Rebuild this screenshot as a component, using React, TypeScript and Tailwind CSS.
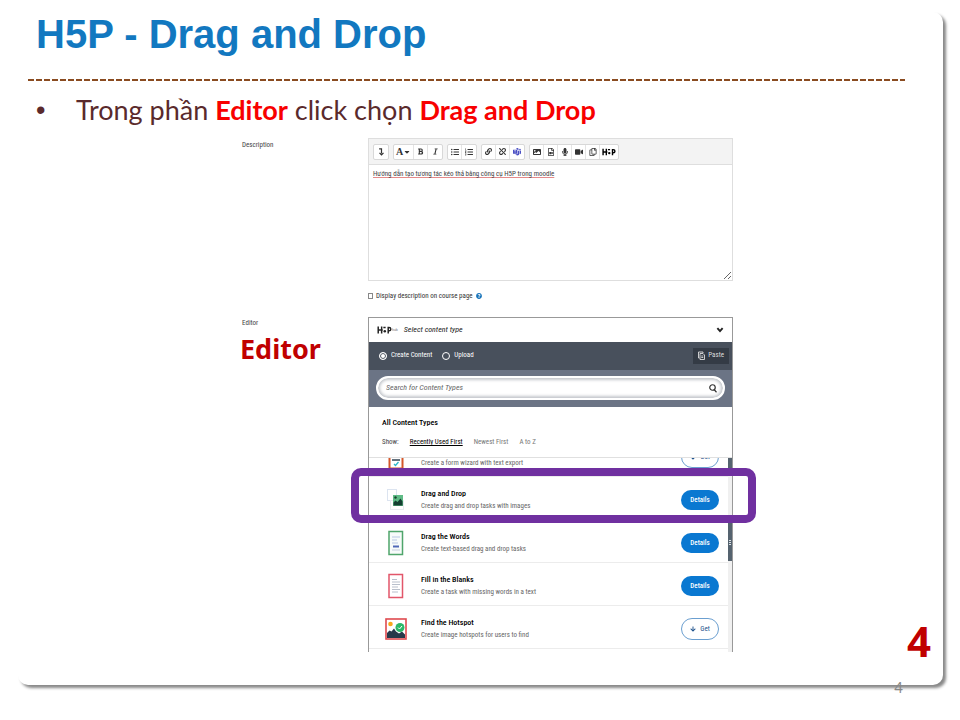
import { useState } from "react";
import type { ReactNode } from "react";
import {
    FaBold,
    FaItalic,
    FaListUl,
    FaListOl,
    FaLink,
    FaImage,
    FaRegFileVideo,
    FaMicrophone,
    FaVideo,
    FaRegCopy,
    FaQuestionCircle,
    FaArrowDown,
    FaCaretDown,
    FaUnlink,
} from "react-icons/fa";
import { BsMicrosoftTeams } from "react-icons/bs";

const H5PMark = ({ className }: { className: string }) => (
    <svg viewBox="0 0 26 14" className={className} fill="none" stroke="currentColor" strokeWidth="2.6">
        <path d="M2 1v12M8 1v12M2 7h8M11 2.500h4M19.500 13V2.500H21a3 3 0 0 1 0 6h-2" />
        <circle cx="13.500" cy="9" r="2.200" fill="currentColor" stroke="none" />
    </svg>
);

const PasteIcon = () => (
    <svg viewBox="0 0 14 18" className="h-[9px] w-[7px]" fill="none" stroke="currentColor" strokeWidth="1.800">
        <path d="M3 14H1V2h9v2" />
        <path d="M4 5h6l3 3v9H4z" />
        <path d="M6.500 10h4M6.500 13h4" />
    </svg>
);

const FormIcon = () => (
    <svg viewBox="0 0 20 26" className="h-[26px] w-5">
        <rect x="3.500" y="1" width="13" height="23.500" fill="#fff" stroke="#d4572a" strokeWidth="2" />
        <path d="M6 16h8" stroke="#345" strokeWidth="1.500" />
        <path d="m8 20 1.500 1.500L12.500 18" fill="none" stroke="#2bb5c9" strokeWidth="1.300" />
    </svg>
);

const DragDropIcon = () => (
    <svg viewBox="0 0 20 26" className="h-[26px] w-5">
        <rect x="1.500" y="2.500" width="9" height="11" fill="#fff" stroke="#dce4f0" />
        <rect x="4.500" y="13.500" width="13" height="9" fill="#fff" stroke="#e8ecf0" />
        <rect x="7" y="8" width="10" height="11" fill="#5fbb86" />
        <circle cx="9.500" cy="10.500" r="1.200" fill="#17442f" />
        <path d="M7.500 18.500v-3l2-2 2 1.500 3-3.500 2 3v4z" fill="#143f31" />
    </svg>
);

const WordsIcon = () => (
    <svg viewBox="0 0 20 26" className="h-[26px] w-5">
        <rect x="3" y="1.500" width="13.500" height="23" fill="#f7fbfa" stroke="#4fa56b" strokeWidth="1.500" />
        <path d="M6 7h8M6 10h5M6 13h6" stroke="#b9c7e4" />
        <path d="M7 16.500h6" stroke="#5068b8" strokeWidth="2" />
        <path d="M6 20h8" stroke="#c5cddd" />
    </svg>
);

const BlanksIcon = () => (
    <svg viewBox="0 0 20 26" className="h-[26px] w-5">
        <rect x="3" y="1.500" width="13.500" height="23" fill="#fff" stroke="#e2566a" strokeWidth="1.500" />
        <path d="M6 6.500h5M6 9h8M6 11.500h8M6 14h6M6 16.500h8M6 19h6" stroke="#b9c0cc" />
    </svg>
);

const HotspotIcon = () => (
    <svg viewBox="0 0 22 22" className="h-[22px] w-[22px] shrink-0">
        <rect x="1" y="1" width="20" height="20" fill="#fff" stroke="#df4a4f" strokeWidth="1.600" />
        <circle cx="5.500" cy="6" r="2.300" fill="#f7a81c" />
        <path d="M2 20v-5l2.500-2.500 2 1 2.500-3 2 3 3 2 3-2 3 3V20z" fill="#26394a" />
        <circle cx="15" cy="9.500" r="4.500" fill="#2bb868" />
        <path d="m13 9.500 1.500 1.500 2.500-3" fill="none" stroke="#fff" />
    </svg>
);

const toolGroups: { label: string; icon: ReactNode }[][] = [
    [{ label: "Show more buttons", icon: <svg viewBox="0 0 8 10" className="h-2 w-[7px]" fill="none" stroke="currentColor" strokeWidth="1.500"><path d="M1 1h3v6M1.500 6 4 8.500 6.500 6" /></svg> }],
    [
        { label: "Paragraph styles", icon: <><b className="font-['Liberation_Serif',serif] text-[10px]">A</b><FaCaretDown size={8} /></> },
        { label: "Bold", icon: <FaBold size={7} /> },
        { label: "Italic", icon: <FaItalic size={7} /> },
    ],
    [
        { label: "Unordered list", icon: <FaListUl size={8} /> },
        { label: "Ordered list", icon: <FaListOl size={8} /> },
    ],
    [
        { label: "Link", icon: <FaLink size={7} /> },
        { label: "Unlink", icon: <FaUnlink size={7} /> },
        { label: "Teams", icon: <BsMicrosoftTeams size={8} color="#4b50c4" /> },
    ],
    [
        { label: "Image", icon: <FaImage size={8} /> },
        { label: "Media", icon: <FaRegFileVideo size={8} /> },
        { label: "Record audio", icon: <FaMicrophone size={8} /> },
        { label: "Record video", icon: <FaVideo size={8} /> },
        { label: "Manage files", icon: <FaRegCopy size={8} /> },
        { label: "H5P", icon: <H5PMark className="h-2 w-[14px] text-black" /> },
    ],
];

// the first row is scrolled halfway out of the list, only its description is in view
const contentTypes = [
    { title: "", text: "Create a form wizard with text export", icon: <FormIcon />, installed: false },
    { title: "Drag and Drop", text: "Create drag and drop tasks with images", icon: <DragDropIcon />, installed: true },
    { title: "Drag the Words", text: "Create text-based drag and drop tasks", icon: <WordsIcon />, installed: true },
    { title: "Fill in the Blanks", text: "Create a task with missing words in a text", icon: <BlanksIcon />, installed: true },
    { title: "Find the Hotspot", text: "Create image hotspots for users to find", icon: <HotspotIcon />, installed: false },
];

const DescriptionEditor = () => {
    const [value, setValue] = useState("Hướng dẫn tạo tương tác kéo thả bằng công cụ H5P trong moodle");

    return (
        <div className="border border-[#dedede]">
            <div className="flex h-[26px] items-center gap-1 border-b border-[#dedede] bg-[#f3f3f3] px-1">
                {toolGroups.map((group, i) => (
                    <div key={i} className="flex rounded-xs border border-[#d8d8d8] bg-white">
                        {group.map((tool) => (
                            <button
                                key={tool.label}
                                aria-label={tool.label}
                                className="flex h-[14px] min-w-[14px] items-center justify-center border-r border-[#e4e4e4] px-[2px] text-[#333] last:border-r-0"
                            >
                                {tool.icon}
                            </button>
                        ))}
                    </div>
                ))}
            </div>
            <textarea
                id="description"
                value={value}
                onChange={(e) => setValue(e.target.value)}
                spellCheck={false}
                className="block h-[115px] w-full resize-y px-1 py-1 text-[7px] leading-[10px] text-[#444] underline decoration-[#e58a8a] outline-none"
            />
        </div>
    );
};

const ContentHub = () => {
    const [mode, setMode] = useState("create");
    const [search, setSearch] = useState("");

    return (
        <div className="border-x border-t border-[#999]">
            <button className="flex h-6 w-full items-center bg-white px-2 text-[#222]">
                <H5PMark className="h-2 w-[15px]" />
                <span className="text-[4px] text-[#777]">hub</span>
                <span className="ml-[6px] text-[8px] italic">Select content type</span>
                <svg viewBox="0 0 10 8" className="ml-auto h-[6px] w-2" fill="none" stroke="currentColor" strokeWidth="2.500">
                    <path d="m1.500 1.500 3.500 4 3.500-4" />
                </svg>
            </button>

            <div className="flex h-7 items-center gap-[10px] bg-[#48505c] pb-px pl-[10px] text-[7px] text-white">
                <label className="flex items-center gap-1">
                    <input
                        type="radio"
                        name="mode"
                        checked={mode === "create"}
                        onChange={() => setMode("create")}
                        className="h-2 w-2 appearance-none rounded-full border border-white checked:bg-white checked:shadow-[inset_0_0_0_1px_#48505c]"
                    />
                    Create Content
                </label>
                <label className="flex items-center gap-1">
                    <input
                        type="radio"
                        name="mode"
                        checked={mode === "upload"}
                        onChange={() => setMode("upload")}
                        className="h-2 w-2 appearance-none rounded-full border border-white checked:bg-white checked:shadow-[inset_0_0_0_1px_#48505c]"
                    />
                    Upload
                </label>
                <button className="mr-[3px] ml-auto flex h-4 items-center gap-[3px] bg-[#343b45] px-[5px] text-[#ddd]">
                    <PasteIcon />
                    Paste
                </button>
            </div>

            <div className="h-[37px] bg-[#6b7485] px-[7px] py-[6px]">
                <div className="flex h-6 items-center rounded-full border-2 border-white bg-white pr-[6px] pl-2 shadow-[inset_0_0_3px_2px_#c4c7cc]">
                    <input
                        value={search}
                        onChange={(e) => setSearch(e.target.value)}
                        placeholder="Search for Content Types"
                        aria-label="Search for Content Types"
                        className="min-w-0 flex-1 text-[8px] italic outline-none placeholder:text-[#666]"
                    />
                    <svg viewBox="0 0 16 18" className="h-[9px] w-2 text-[#333]" fill="none" stroke="currentColor" strokeWidth="2.400">
                        <circle cx="7" cy="7" r="5.500" />
                        <path d="m10.500 11.500 4.500 5" />
                    </svg>
                </div>
            </div>

            <div className="h-[50px] bg-white px-[13px] pt-[10px]">
                <h3 className="text-[8px] leading-3 font-medium text-black">All Content Types</h3>
                <div className="mt-[7px] flex gap-[11px] text-[7px] leading-3 text-[#777]">
                    <span className="text-[#444]">Show:</span>
                    <button className="text-black underline">Recently Used First</button>
                    <button>Newest First</button>
                    <button>A to Z</button>
                </div>
            </div>

            <div className="relative">
                <div className="flex h-[195px] overflow-hidden border-t border-[#e0e0e0]">
                    <ul className="flex flex-1 flex-col justify-end pb-[3px]">
                        {contentTypes.map((type) => (
                            <li
                                key={type.text}
                                className="flex h-[43px] shrink-0 items-center border-b border-[#ececec] pt-1 pr-[9px] pl-[17px]"
                            >
                                <div className="flex w-5 shrink-0 justify-center">{type.icon}</div>
                                <div className="ml-[15px] flex-1">
                                    <h4 className="min-h-[13px] text-[8px] leading-[13px] font-medium text-black">{type.title}</h4>
                                    <p className="text-[7px] leading-[13px] text-[#666]">{type.text}</p>
                                </div>
                                {type.installed ? (
                                    <button className="h-5 w-[38px] rounded-full bg-[#0a78d1] text-[7px] font-medium text-white">
                                        Details
                                    </button>
                                ) : (
                                    <button className="flex h-[22px] w-[38px] items-center justify-center gap-1 rounded-full border border-[#6b9fd0] text-[7px] text-[#1a4f8a]">
                                        <FaArrowDown size={6} />
                                        Get
                                    </button>
                                )}
                            </li>
                        ))}
                    </ul>
                    <div className="flex w-1 flex-col justify-between bg-[#f0f0f0] pb-[91px]">
                        <div className="h-3 bg-[#55636f]"></div>
                        <div className="flex h-[38px] items-center justify-center bg-[#55636f]">
                            <div className="h-[5px] w-[2px] bg-[repeating-linear-gradient(#dde3e8_0_1px,transparent_1px_2px)]"></div>
                        </div>
                    </div>
                </div>
                <div className="pointer-events-none absolute top-[11px] -right-6 -left-[18px] h-[55px] rounded-[10px] border-8 border-[#7030a0]"></div>
            </div>
        </div>
    );
};

const App = () => {
    return (
        <div className="min-h-screen bg-white pt-3 pr-[17px] pl-[18px] font-['Roboto_Condensed','Open_Sans_Condensed','Open_Sans',sans-serif]">
            <main className="relative min-h-[673px] rounded-[10px] bg-white shadow-[3px_3px_3px_#888]">
                <h1 className="pl-[18px] font-['Liberation_Sans',sans-serif] text-[40px] leading-[44px] font-bold text-[#1278c0]">
                    H5P - Drag and Drop
                </h1>
                <div className="mt-[23px] mr-[38px] ml-[10px] h-[2px] bg-[repeating-linear-gradient(90deg,#8a4b20_0_6px,transparent_6px_8px)]"></div>

                <ul className="mt-3 pl-[18px] font-['Lato',sans-serif] text-[27px] leading-[34px] text-[#5a2a2c]">
                    <li className="flex">
                        <span className="w-10 font-['Liberation_Sans',sans-serif]">•</span>
                        <p>
                            Trong phần <b className="text-[#f80000]">Editor</b> click chọn{" "}
                            <b className="text-[#f80000]">Drag and Drop</b>
                        </p>
                    </li>
                </ul>

                <div className="mt-[11px] grid grid-cols-[126px_1fr] pr-[210px] pl-[224px]">
                    <label htmlFor="description" className="pt-[2px] text-[7px] leading-[10px] text-[#444]">
                        Description
                    </label>
                    <div>
                        <DescriptionEditor />
                        <label className="mt-[9px] flex h-3 items-center gap-[3px] text-[7px] text-[#333]">
                            <input type="checkbox" className="h-[6px] w-[5px] appearance-none border border-[#888] checked:bg-[#888]" />
                            Display description on course page
                            <FaQuestionCircle size={6} className="text-[#1673ba]" />
                        </label>
                    </div>

                    <div className="pt-4">
                        <p className="text-[7px] leading-[10px] text-[#444]">Editor</p>
                        <p className="-ml-[2px] font-['Noto_Sans',sans-serif] text-[27px] leading-[42px] font-bold text-[#c00000]">
                            Editor
                        </p>
                    </div>
                    <div className="pt-[15px]">
                        <ContentHub />
                    </div>
                </div>

                <strong className="absolute right-3 bottom-5 font-['Noto_Sans',sans-serif] text-[42px] leading-[48px] font-bold text-[#c00000]">
                    4
                </strong>
                <span className="absolute right-10 -bottom-[10px] font-['Lato',sans-serif] text-[15px] leading-4 text-[#888]">4</span>
            </main>
        </div>
    );
};

export default App;
